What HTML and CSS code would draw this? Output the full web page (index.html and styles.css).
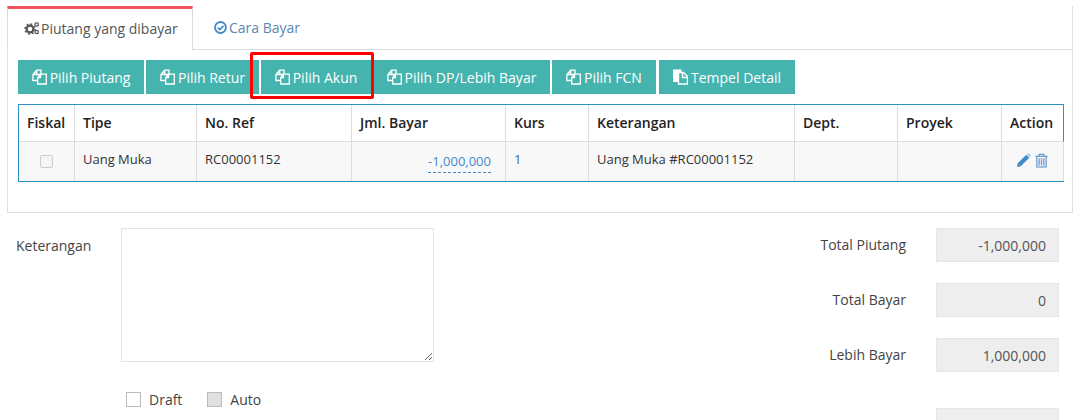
FILE: index.html
```html
<!DOCTYPE html>
<html lang="id">
<head>
<meta charset="utf-8">
<title>Piutang</title>
<link rel="stylesheet" href="styles.css">
</head>
<body>
<svg class="defs" width="0" height="0" aria-hidden="true">
  <symbol id="i-copy" viewBox="0 0 15 16">
    <path d="M4.700 1.200H9v3.300a1 1 0 0 1-1 1H4.700zM4.700 1.200 .9 5.500V11.500H5.500M.9 5.500H4.700" fill="none" stroke="currentColor" stroke-width="1.300"/>
    <path d="M8.500 5.200H14.300V15H5.700V8.500zM8.500 5.200V8.500H5.700" fill="none" stroke="currentColor" stroke-width="1.300"/>
  </symbol>
  <symbol id="i-paste" viewBox="0 0 15 16">
    <path d="M0 .5h8.500V3.500H5.500V13H0z" fill="currentColor"/>
    <path d="M5.500 3.500H10.500L14.500 7.500V15H5.500z" fill="none" stroke="currentColor" stroke-width="1.400"/>
    <path d="M9.500 3.500V8.500H14.500" fill="none" stroke="currentColor" stroke-width="1.400"/>
  </symbol>
</svg>
<main class="page">
  <section class="panel">
    <nav class="tabs">
      <div class="tab tab-active">
        <svg class="ico-cogs" viewBox="0 0 16 14" width="16" height="14" aria-hidden="true">
          <circle cx="6" cy="8" r="3.400" fill="none" stroke="#555" stroke-width="2.200"/>
          <circle cx="6" cy="8" r="5" fill="none" stroke="#555" stroke-width="1.600" stroke-dasharray="1.800 2.100"/>
          <circle cx="12.700" cy="3.500" r="1.700" fill="none" stroke="#555" stroke-width="1.300"/>
          <circle cx="12.700" cy="11" r="1.700" fill="none" stroke="#555" stroke-width="1.300"/>
        </svg><span>Piutang yang dibayar</span>
      </div>
      <div class="tab tab-link">
        <svg class="ico-check" viewBox="0 0 14 14" width="13" height="13" aria-hidden="true">
          <circle cx="7" cy="7" r="5.900" fill="none" stroke="#428bca" stroke-width="2"/>
          <path d="M4 7l2.200 2.200L10.200 5.200" fill="none" stroke="#428bca" stroke-width="1.900"/>
        </svg><span>Cara Bayar</span>
      </div>
    </nav>
    <div class="tab-body">
      <div class="toolbar">
        <button class="btn btn-a"><svg class="ico" aria-hidden="true"><use href="#i-copy"/></svg>Pilih Piutang</button>
        <button class="btn btn-b"><svg class="ico" aria-hidden="true"><use href="#i-copy"/></svg>Pilih Retur</button>
        <button class="btn btn-c"><svg class="ico" aria-hidden="true"><use href="#i-copy"/></svg>Pilih Akun</button>
        <button class="btn btn-d"><svg class="ico" aria-hidden="true"><use href="#i-copy"/></svg>Pilih DP/Lebih Bayar</button>
        <button class="btn btn-e"><svg class="ico" aria-hidden="true"><use href="#i-copy"/></svg>Pilih FCN</button>
        <button class="btn btn-f"><svg class="ico" aria-hidden="true"><use href="#i-paste"/></svg>Tempel Detail</button>
        <div class="highlight"></div>
      </div>
      <table class="grid">
        <colgroup>
          <col class="c1"><col class="c2"><col class="c3"><col class="c4"><col class="c5"><col class="c6"><col class="c7"><col class="c8"><col class="c9">
        </colgroup>
        <thead>
          <tr><th>Fiskal</th><th>Tipe</th><th>No. Ref</th><th>Jml. Bayar</th><th>Kurs</th><th>Keterangan</th><th>Dept.</th><th>Proyek</th><th>Action</th></tr>
        </thead>
        <tbody>
          <tr>
            <td class="center"><span class="mini-check"></span></td>
            <td>Uang Muka</td>
            <td>RC00001152</td>
            <td class="right"><a class="editable">-1,000,000</a></td>
            <td class="link">1</td>
            <td>Uang Muka #RC00001152</td>
            <td></td>
            <td></td>
            <td class="actions">
              <svg viewBox="0 0 16 16" width="15" height="15" aria-hidden="true"><path d="M1 15l.8-4L11 1.800 14.200 5 5 14.200zM12 .9l.8-.5 2.800 2.800-.5.800z" fill="#428bca"/></svg>
              <svg viewBox="0 0 14 16" width="13" height="15" aria-hidden="true"><path d="M.5 3.500h13M4.500 3.500V1.300h5v2.200M2 3.500V15h10V3.500" fill="none" stroke="#428bca" stroke-width="1.100"/><path d="M4.500 5.500V13.500M7 5.500V13.500M9.500 5.500V13.500" stroke="#7f9fd8" stroke-width="1.500"/></svg>
            </td>
          </tr>
        </tbody>
      </table>
    </div>
  </section>
  <section class="form">
    <div class="form-left">
      <div class="note-row">
        <label class="note-label">Keterangan</label>
        <textarea class="note"></textarea>
      </div>
      <div class="checks">
        <label class="check"><span class="box"></span>Draft</label>
        <label class="check"><span class="box box-off"></span>Auto</label>
      </div>
    </div>
    <div class="form-right">
      <div class="sum-row"><label>Total Piutang</label><div class="sum-val">-1,000,000</div></div>
      <div class="sum-row"><label>Total Bayar</label><div class="sum-val">0</div></div>
      <div class="sum-row"><label>Lebih Bayar</label><div class="sum-val">1,000,000</div></div>
      <div class="sum-row sum-last"><label></label><div class="sum-val"></div></div>
    </div>
  </section>
</main>
</body>
</html>
```

FILE: styles.css
```css
* { box-sizing: border-box; }
html, body { margin: 0; height: 420px; overflow: hidden; background: #fff; }
body { font-family: "Open Sans", sans-serif; font-size: 14px; color: #333; }
.defs { position: absolute; }
.page { height: 420px; overflow: hidden; padding: 6px 5px 0 7px; }
.panel { border: 1px solid #e0e0e0; border-top: 0; height: 207px; }
.tabs { display: flex; height: 44px; margin-left: -1px; border-bottom: 1px solid #ddd; }
.tab { display: flex; align-items: center; height: 44px; font-size: 14px; }
.tab-active { width: 186px; padding: 0 0 3px 16px; border-top: 3px solid #f0525f; border-right: 1px solid #ddd; border-left: 1px solid #ddd; background: #fff; color: #555; }
.tab-link { padding: 0 0 1px 21px; color: #5a87b5; }
.ico-cogs { margin-right: 1px; }
.ico-check { margin-right: 2px; }
.tab-body { padding: 10px 10px 0 10px; }
.toolbar { position: relative; display: flex; height: 34px; }
.btn { display: flex; align-items: center; justify-content: center; height: 34px; padding: 0; border: 0; border-radius: 0; background: #45b4ae; color: #fff; font-family: inherit; font-size: 14px; }
.btn-a { width: 126px; margin-right: 2px; }
.btn-b { width: 113px; margin-right: 2px; }
.btn-c { width: 110px; margin-right: 2px; }
.btn-d { width: 177px; margin-right: 2px; }
.btn-e { width: 104px; margin-right: 3px; }
.btn-f { width: 136px; }
.ico { width: 15px; height: 16px; margin-right: 3px; }
.highlight { position: absolute; left: 232px; top: -8px; width: 124px; height: 47px; border: 3px solid #f00; border-radius: 2px; }
.grid { width: 1045px; margin-top: 10px; border-collapse: separate; border-spacing: 0; table-layout: fixed; border: 1px solid #2a93c4; border-right: 0; }
.c1 { width: 56px; } .c2 { width: 122px; } .c3 { width: 155px; } .c4 { width: 154px; } .c5 { width: 83px; } .c6 { width: 206px; } .c7 { width: 103px; } .c8 { width: 104px; } .c9 { width: 62px; }
.grid th, .grid td { padding: 0 8px; border-right: 1px solid #ddd; text-align: left; }
.grid th:last-child { border-right-color: #2a93c4; }
.grid th { height: 37px; padding-bottom: 2px; border-bottom: 1px solid #ddd; color: #222; font-size: 14px; font-weight: 600; }
.grid td { height: 39px; padding-bottom: 6px; background: #f8f8f8; font-size: 13px; color: #333; }
.grid td.center { text-align: center; padding: 0 0 4px; }
.grid td.right { text-align: right; padding: 0 14px 4px 8px; }
.grid td.link { color: #3a6ea5; }
.grid td.actions { padding: 0 0 2px 14px; white-space: nowrap; font-size: 0; }
.actions svg + svg { margin-left: 4px; }
.mini-check { display: inline-block; width: 13px; height: 13px; border: 1px solid #ccc; border-radius: 2px; vertical-align: middle; background: #f5f5f5; }
.editable { display: inline-block; padding-top: 4px; line-height: 22px; color: #428bca; border-bottom: 1px dashed #428bca; }
.form { display: flex; justify-content: space-between; padding-top: 15px; }
.form-left { width: 430px; }
.note-row { display: flex; }
.note-label { width: 114px; padding: 8px 0 0 9px; color: #444; }
.note { display: block; width: 313px; height: 134px; border: 1px solid #e2e2e2; resize: both; outline: 0; background: #fff; margin: 0; }
.checks { display: flex; gap: 25px; margin: 27px 0 0 119px; }
.check { display: flex; align-items: center; gap: 8px; height: 20px; color: #444; }
.box { display: block; width: 15px; height: 15px; border: 1px solid #bbb; background: #fff; }
.box-off { background: #e0e0e0; }
.form-right { width: 273px; margin-right: 14px; }
.sum-row { display: flex; align-items: center; height: 34px; margin-bottom: 21px; }
.sum-row label { flex: none; width: 120px; margin: -2px 30px 0 0; text-align: right; color: #444; }
.sum-val { width: 123px; height: 34px; padding: 0 12px 0 0; border: 1px solid #e6e6e6; background: #eee; color: #555; text-align: right; line-height: 33px; }
.sum-last { margin-top: 36px; }
```
